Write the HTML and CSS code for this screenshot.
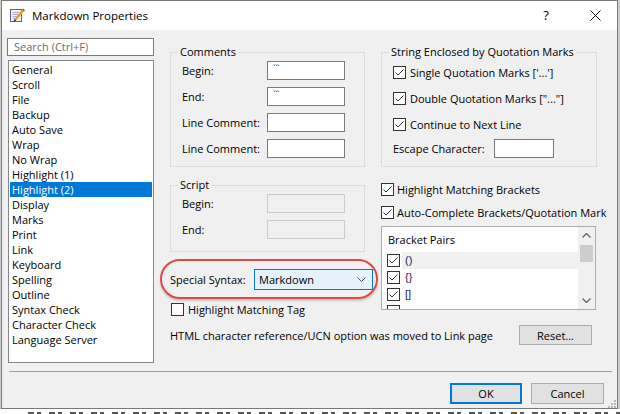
FILE: index.html
```html
<!DOCTYPE html>
<html>
<head>
<meta charset="utf-8">
<title>Markdown Properties</title>
<link rel="stylesheet" href="styles.css">
</head>
<body>
<div class="screen">
  <div class="window">
    <div class="titlebar">
      <svg class="appicon" width="16" height="16" viewBox="0 0 16 16">
        <rect x="1.5" y="2.5" width="11" height="12" fill="#f1f1fb" stroke="#5d5f92"/>
        <path d="M3.5 5.5h7M3.5 7.5h7M3.5 9.5h6M3.5 11.5h4" stroke="#a7acd0"/>
        <path d="M6.5 12.5 L14 3.5" stroke="#e2a526" stroke-width="2.6"/>
        <path d="M14 3.5 L15 2.3" stroke="#b04030" stroke-width="2.6"/>
        <path d="M5.2 14.2 L6.6 12.4" stroke="#333" stroke-width="1.6"/>
      </svg>
      <span class="title">Markdown Properties</span>
      <span class="help">?</span>
      <svg class="close" width="11" height="11" viewBox="0 0 11 11">
        <path d="M0.5 0.5 L10.5 10.5 M10.5 0.5 L0.5 10.5" stroke="#111" stroke-width="1"/>
      </svg>
    </div>
    <div class="body">
      <div class="main">
        <div class="sidebar">
          <div class="search">Search (Ctrl+F)</div>
          <ul class="nav">
            <li>General</li>
            <li>Scroll</li>
            <li>File</li>
            <li>Backup</li>
            <li>Auto Save</li>
            <li>Wrap</li>
            <li>No Wrap</li>
            <li>Highlight (1)</li>
            <li class="selected">Highlight (2)</li>
            <li>Display</li>
            <li>Marks</li>
            <li>Print</li>
            <li>Link</li>
            <li>Keyboard</li>
            <li>Spelling</li>
            <li>Outline</li>
            <li>Syntax Check</li>
            <li>Character Check</li>
            <li>Language Server</li>
          </ul>
        </div>
        <div class="content">
          <div class="columns">
            <div class="col">
              <fieldset class="group comments">
                <legend>Comments</legend>
                <div class="frow"><span>Begin:</span><span class="field">```</span></div>
                <div class="frow"><span>End:</span><span class="field">```</span></div>
                <div class="frow"><span>Line Comment:</span><span class="field"></span></div>
                <div class="frow"><span>Line Comment:</span><span class="field"></span></div>
              </fieldset>
              <fieldset class="group script">
                <legend>Script</legend>
                <div class="frow"><span>Begin:</span><span class="field disabled"></span></div>
                <div class="frow"><span>End:</span><span class="field disabled"></span></div>
              </fieldset>
              <div class="syntax-row">
                <span class="syntax-label">Special Syntax:</span>
                <div class="select">
                  <span>Markdown</span>
                  <svg class="chev" width="9" height="5" viewBox="0 0 9 5"><path d="M0.5 0.5 L4.5 4.5 L8.5 0.5" stroke="#555" fill="none"/></svg>
                </div>
                <div class="ring"></div>
              </div>
              <div class="check tag-check">
                <span class="box"></span>
                <span>Highlight Matching Tag</span>
              </div>
            </div>
            <div class="col">
              <fieldset class="group strings">
                <legend>String Enclosed by Quotation Marks</legend>
                <div class="check srow">
                  <span class="box checked"><svg width="13" height="13" viewBox="0 0 13 13"><path d="M2.5 6.5 L5 9 L10.5 3.5" stroke="#333" fill="none"/></svg></span>
                  <span>Single Quotation Marks ['...']</span>
                </div>
                <div class="check srow">
                  <span class="box checked"><svg width="13" height="13" viewBox="0 0 13 13"><path d="M2.5 6.5 L5 9 L10.5 3.5" stroke="#333" fill="none"/></svg></span>
                  <span>Double Quotation Marks ["..."]</span>
                </div>
                <div class="check srow">
                  <span class="box checked"><svg width="13" height="13" viewBox="0 0 13 13"><path d="M2.5 6.5 L5 9 L10.5 3.5" stroke="#333" fill="none"/></svg></span>
                  <span>Continue to Next Line</span>
                </div>
                <div class="frow escape"><span>Escape Character:</span><span class="field short"></span></div>
              </fieldset>
              <div class="check brow first">
                <span class="box checked"><svg width="13" height="13" viewBox="0 0 13 13"><path d="M2.5 6.5 L5 9 L10.5 3.5" stroke="#333" fill="none"/></svg></span>
                <span>Highlight Matching Brackets</span>
              </div>
              <div class="check brow">
                <span class="box checked"><svg width="13" height="13" viewBox="0 0 13 13"><path d="M2.5 6.5 L5 9 L10.5 3.5" stroke="#333" fill="none"/></svg></span>
                <span>Auto-Complete Brackets/Quotation Mark</span>
              </div>
              <div class="pairs">
                <div class="pairs-body">
                  <div class="pairs-head">Bracket Pairs</div>
                  <div class="prow current">
                    <span class="box checked"><svg width="13" height="13" viewBox="0 0 13 13"><path d="M2.5 6.5 L5 9 L10.5 3.5" stroke="#333" fill="none"/></svg></span>
                    <span class="ptext">()</span>
                  </div>
                  <div class="prow">
                    <span class="box checked"><svg width="13" height="13" viewBox="0 0 13 13"><path d="M2.5 6.5 L5 9 L10.5 3.5" stroke="#333" fill="none"/></svg></span>
                    <span class="ptext">{}</span>
                  </div>
                  <div class="prow">
                    <span class="box checked"><svg width="13" height="13" viewBox="0 0 13 13"><path d="M2.5 6.5 L5 9 L10.5 3.5" stroke="#333" fill="none"/></svg></span>
                    <span class="ptext">[]</span>
                  </div>
                  <div class="prow">
                    <span class="box"></span>
                    <span class="ptext"></span>
                  </div>
                </div>
                <div class="scrollbar">
                  <div class="sb-btn"><svg width="9" height="5" viewBox="0 0 9 5"><path d="M0.5 4.5 L4.5 0.5 L8.5 4.5" stroke="#606060" fill="none" stroke-width="1.2"/></svg></div>
                  <div class="sb-thumb"></div>
                  <div class="sb-track"></div>
                  <div class="sb-btn"><svg width="9" height="5" viewBox="0 0 9 5"><path d="M0.5 0.5 L4.5 4.5 L8.5 0.5" stroke="#606060" fill="none" stroke-width="1.2"/></svg></div>
                </div>
              </div>
            </div>
          </div>
          <div class="note-row">
            <span>HTML character reference/UCN option was moved to Link page</span>
            <span class="btn reset">Reset...</span>
          </div>
        </div>
      </div>
      <div class="footer">
        <span class="btn default">OK</span>
        <span class="btn">Cancel</span>
      </div>
      <svg class="grip" width="9" height="9" viewBox="0 0 9 9">
        <rect x="7" y="1" width="2" height="2" fill="#b8b8b8"/>
        <rect x="4" y="4" width="2" height="2" fill="#b8b8b8"/>
        <rect x="7" y="4" width="2" height="2" fill="#b8b8b8"/>
        <rect x="1" y="7" width="2" height="2" fill="#b8b8b8"/>
        <rect x="4" y="7" width="2" height="2" fill="#b8b8b8"/>
        <rect x="7" y="7" width="2" height="2" fill="#b8b8b8"/>
      </svg>
    </div>
  </div>
  <div class="backdrop"></div>
</div>
</body>
</html>
```

FILE: styles.css
```css
* { box-sizing: border-box; }

html, body {
  margin: 0;
  padding: 0;
}

body {
  width: 620px;
  height: 414px;
  overflow: hidden;
  background: #cfcfcf;
  font-family: "Open Sans", "Noto Sans", "Liberation Sans", sans-serif;
  font-size: 11px;
  color: #000;
}

.screen {
  width: 620px;
  height: 414px;
  display: flex;
  flex-direction: column;
}

.window {
  margin-left: 1px;
  width: 617px;
  height: 409px;
  border: 1px solid #7a7a7a;
  display: flex;
  flex-direction: column;
  flex: none;
}

.backdrop {
  flex: 1;
  background-color: #fff;
  background-image: repeating-linear-gradient(90deg, #555 0 6px, transparent 6px 9px, #555 9px 13px, transparent 13px 21px);
  background-size: 100% 2px;
  background-position: 28px 3px;
  background-repeat: no-repeat;
}

/* title bar */
.titlebar {
  height: 29px;
  background: #fff;
  display: flex;
  align-items: center;
  padding-left: 7px;
  flex: none;
}

.appicon { flex: none; margin-top: -1px; }

.title {
  margin-left: 7px;
  font-size: 11.5px;
  flex: 1;
  padding-bottom: 1px;
}

.help {
  font-size: 13px;
  width: 20px;
  text-align: center;
  margin-right: 34px;
  padding-bottom: 1px;
}

.close { margin-right: 16px; }

/* body */
.body {
  flex: 1;
  background: #f0f0f0;
  display: flex;
  flex-direction: column;
  position: relative;
}

.main {
  flex: 1;
  display: flex;
  padding: 8px 0 0 5px;
}

.sidebar {
  width: 147px;
  flex: none;
  display: flex;
  flex-direction: column;
}

.search {
  height: 18px;
  border: 1px solid #7a7a7a;
  background: #fff;
  color: #6d6d6d;
  padding-left: 6px;
  line-height: 15px;
}

.nav {
  list-style: none;
  margin: 4px 0 0 1px;
  padding: 1px 1px;
  width: 146px;
  height: 303px;
  border: 1px solid #828790;
  background: #fff;
}

.nav li {
  height: 15px;
  line-height: 15px;
  padding-left: 2px;
  white-space: nowrap;
}

.nav li.selected {
  background: #0078d7;
  color: #fff;
}

.content {
  margin-left: 16px;
  padding-top: 6px;
  width: 427px;
  display: flex;
  flex-direction: column;
}

.columns {
  display: grid;
  grid-template-columns: 195px 216px;
  column-gap: 16px;
  height: 273px;
}

.col {
  display: flex;
  flex-direction: column;
}

/* group boxes */
.group {
  margin: 0;
  border: 1px solid #dcdcdc;
  padding: 0 19px 8px 11px;
  min-width: 0;
}

.group legend {
  padding: 0 2px;
  margin-left: -4px;
  line-height: 16px;
  height: 16px;
}

.frow {
  display: flex;
  align-items: center;
  justify-content: space-between;
  height: 19px;
  margin-top: 7px;
}

.comments .frow:first-of-type,
.script .frow:first-of-type {
  margin-top: 1px;
}

.script {
  margin-top: 10px;
  padding-bottom: 12px;
}

.field {
  width: 78px;
  height: 19px;
  border: 1px solid #7a7a7a;
  background: #fff;
  font-size: 9px;
  line-height: 9px;
  padding-left: 5px;
  padding-top: 2px;
  color: #333;
  letter-spacing: -0.5px;
}

.field.disabled {
  border-color: #cccccc;
  background: #f0f0f0;
}

.field.short { width: 60px; }

.strings {
  padding-right: 10px;
}

.check {
  display: flex;
  align-items: center;
  white-space: nowrap;
}

.box {
  width: 13px;
  height: 13px;
  border: 1px solid #333;
  background: #fff;
  flex: none;
  position: relative;
}

.box svg {
  position: absolute;
  left: -1px;
  top: -1px;
}

.check .box { margin-right: 4px; }

.srow {
  height: 19px;
  margin-top: 7px;
}

.strings .srow:first-of-type { margin-top: 3px; }

.escape {
  margin-top: 5px;
  justify-content: flex-start;
}

.escape .field { margin-left: auto; margin-right: 32px; }

.brow {
  height: 16px;
  margin-top: 7px;
}

.brow.first { margin-top: 14px; }

.brow .box { margin-right: 3px; }

/* special syntax */
.syntax-row {
  position: relative;
  display: flex;
  align-items: center;
  height: 21px;
  margin-top: 17px;
}

.syntax-label {
  width: 84px;
  flex: none;
}

.select {
  width: 119px;
  height: 21px;
  flex: none;
  border: 1px solid #0078d7;
  background: #e5f1fb;
  display: flex;
  align-items: center;
  justify-content: space-between;
  padding: 0 6px 0 4px;
}

.ring {
  position: absolute;
  left: -10px;
  top: -10px;
  width: 218px;
  height: 40px;
  border: 2px solid #de4a45;
  border-radius: 20px / 50%;
  box-shadow: 0 2px 2px rgba(0, 0, 0, 0.18);
}

.tag-check {
  height: 16px;
  margin-top: 11px;
  padding-left: 1px;
}

/* bracket pairs */
.pairs {
  margin-top: 6px;
  height: 84px;
  border: 1px solid #adadad;
  background: #fff;
  display: flex;
  width: 215px;
}

.pairs-body {
  flex: 1;
  overflow: hidden;
}

.pairs-head {
  height: 25px;
  line-height: 25px;
  padding-left: 6px;
}

.prow {
  height: 17px;
  display: flex;
  align-items: center;
  padding-left: 5px;
}

.prow .box { margin-right: 2px; }

.ptext {
  flex: 1;
  height: 17px;
  line-height: 17px;
  padding-left: 3px;
  font-family: "Liberation Sans Narrow", "Liberation Sans", sans-serif;
  font-size: 11px;
  color: #1a1a60;
}

.prow.current .ptext { background: #f0f0f0; }

.scrollbar {
  width: 17px;
  flex: none;
  background: #f0f0f0;
  display: flex;
  flex-direction: column;
}

.sb-btn {
  height: 17px;
  display: flex;
  align-items: center;
  justify-content: center;
}

.sb-thumb {
  height: 17px;
  margin: 1px 2px 0;
  background: #cdcdcd;
}

.sb-track { flex: 1; }

/* bottom of content */
.note-row {
  display: flex;
  align-items: center;
  justify-content: space-between;
  margin-top: 8px;
  height: 20px;
  padding-right: 5px;
}

.btn {
  display: inline-flex;
  align-items: center;
  justify-content: center;
  width: 73px;
  height: 21px;
  background: #e1e1e1;
  border: 1px solid #adadad;
  flex: none;
}

.btn.reset {
  height: 20px;
}

.btn.default {
  border: 2px solid #0078d7;
  width: 72px;
}

.footer {
  flex: none;
  margin: 0 5px 0 7px;
  border-top: 1px solid #a0a0a0;
  padding: 11px 8px 4px 0;
  display: flex;
  justify-content: flex-end;
  gap: 9px;
}

.grip {
  position: absolute;
  right: 1px;
  bottom: 0;
}
```
